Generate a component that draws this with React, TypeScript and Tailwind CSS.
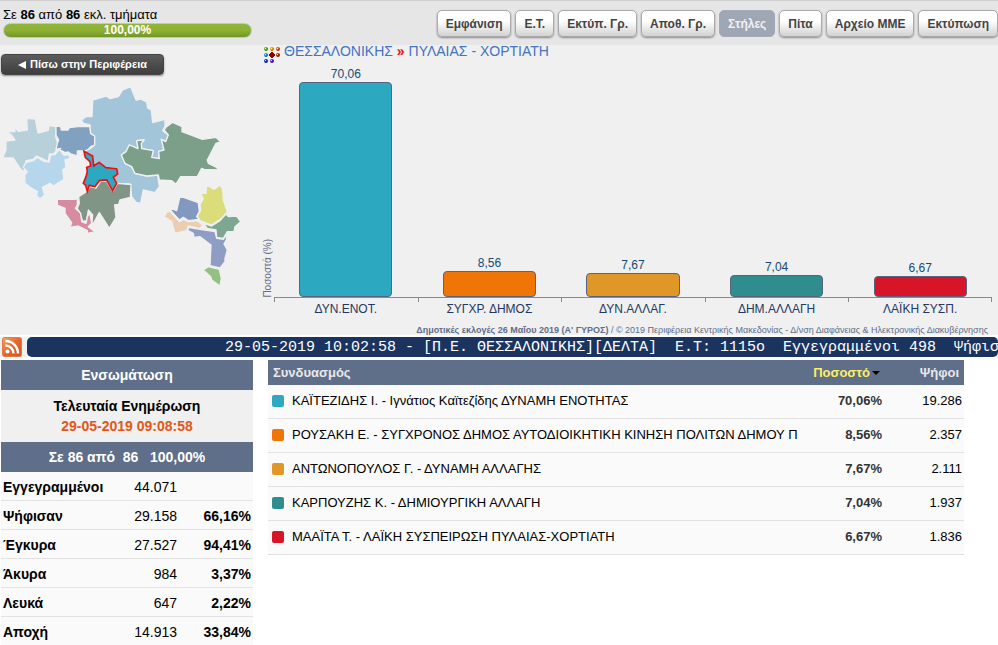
import React from 'react';
import clsx from 'clsx';

interface Party {
  short: string;
  name: string;
  percent: number;
  votes: string;
  color: string;
}

interface Region {
  id: string;
  fill: string;
  points: string;
}

const parties: Party[] = [
  {
    short: 'ΔΥΝ.ΕΝΟΤ.',
    name: 'ΚΑΪΤΕΖΙΔΗΣ Ι. - Ιγνάτιος Καϊτεζίδης ΔΥΝΑΜΗ ΕΝΟΤΗΤΑΣ',
    percent: 70.06,
    votes: '19.286',
    color: '#2ca9c1',
  },
  {
    short: 'ΣΥΓΧΡ. ΔΗΜΟΣ',
    name: 'ΡΟΥΣΑΚΗ Ε. - ΣΥΓΧΡΟΝΟΣ ΔΗΜΟΣ ΑΥΤΟΔΙΟΙΚΗΤΙΚΗ ΚΙΝΗΣΗ ΠΟΛΙΤΩΝ ΔΗΜΟΥ Π',
    percent: 8.56,
    votes: '2.357',
    color: '#f07507',
  },
  {
    short: 'ΔΥΝ.ΑΛΛΑΓ.',
    name: 'ΑΝΤΩΝΟΠΟΥΛΟΣ Γ. - ΔΥΝΑΜΗ ΑΛΛΑΓΗΣ',
    percent: 7.67,
    votes: '2.111',
    color: '#df9827',
  },
  {
    short: 'ΔΗΜ.ΑΛΛΑΓΗ',
    name: 'ΚΑΡΠΟΥΖΗΣ Κ. - ΔΗΜΙΟΥΡΓΙΚΗ ΑΛΛΑΓΗ',
    percent: 7.04,
    votes: '1.937',
    color: '#2f8d8e',
  },
  {
    short: 'ΛΑΪΚΗ ΣΥΣΠ.',
    name: 'ΜΑΑΪΤΑ Τ. - ΛΑΪΚΗ ΣΥΣΠΕΙΡΩΣΗ ΠΥΛΑΙΑΣ-ΧΟΡΤΙΑΤΗ',
    percent: 6.67,
    votes: '1.836',
    color: '#d81428',
  },
];

const turnout = [
  { label: 'Εγγεγραμμένοι', count: '44.071', percent: '' },
  { label: 'Ψήφισαν', count: '29.158', percent: '66,16%' },
  { label: 'Έγκυρα', count: '27.527', percent: '94,41%' },
  { label: 'Άκυρα', count: '984', percent: '3,37%' },
  { label: 'Λευκά', count: '647', percent: '2,22%' },
  { label: 'Αποχή', count: '14.913', percent: '33,84%' },
];

const toolbar = [
  'Εμφάνιση',
  'Ε.Τ.',
  'Εκτύπ. Γρ.',
  'Αποθ. Γρ.',
  'Στήλες',
  'Πίτα',
  'Αρχείο ΜΜΕ',
  'Εκτύπωση',
];

const regions: Region[] = [
  {
    id: 'west',
    fill: '#b7d0d9',
    points:
      '10,145 24,154 45,155 42,140 55,154 82,150 80,115 106,117 114,159 145,151 147,137 170,140 167,170 172,185 175,205 160,222 148,222 145,245 125,235 110,228 100,238 78,242 76,262 70,276 58,262 40,234 8,233 18,210 18,183 45,180 34,165',
  },
  {
    id: 'northwest',
    fill: '#80a1bf',
    points:
      '168,138 182,140 184,150 204,150 208,143 240,139 270,140 272,160 284,168 284,195 272,200 262,212 232,213 232,228 212,222 205,216 195,218 185,212 178,214 182,205 168,208 172,190 176,180 168,165',
  },
  {
    id: 'southwest',
    fill: '#b6d6ec',
    points:
      '78,247 100,242 112,232 130,243 147,246 152,225 165,224 178,208 192,226 208,224 210,235 195,240 198,262 188,270 192,298 160,318 150,310 127,322 134,345 120,357 110,347 112,335 90,322 75,310 74,285 82,275 70,262',
  },
  {
    id: 'north',
    fill: '#a2c5da',
    points:
      '245,120 258,110 276,110 278,60 318,48 330,56 355,50 368,30 392,20 408,60 422,57 440,66 443,84 454,90 458,128 495,118 495,140 488,152 505,165 497,185 484,178 492,210 476,214 478,236 455,232 460,212 425,206 424,190 432,180 410,182 414,206 388,195 378,215 364,225 375,250 395,260 405,280 440,288 473,285 478,320 465,338 430,330 422,370 408,367 395,350 390,312 352,310 340,295 350,265 318,262 295,246 282,258 278,228 252,214 272,205 284,195 284,168 272,160 270,135 250,130',
  },
  {
    id: 'east',
    fill: '#7b9f88',
    points:
      '492,150 498,142 518,127 546,140 546,155 607,178 648,172 662,186 648,190 622,240 625,250 650,262 655,270 612,268 605,265 592,290 542,290 528,312 515,302 478,300 475,285 440,288 405,280 395,260 375,250 364,225 378,215 388,195 414,206 410,182 432,180 424,190 425,206 460,212 455,232 478,236 476,214 492,210 484,178 497,185 505,165',
  },
  {
    id: 'south',
    fill: '#809585',
    points:
      '236,350 258,336 270,320 288,324 302,304 320,304 338,334 352,310 393,314 391,352 360,360 356,373 344,375 348,412 328,445 298,398 275,440 278,405 265,390 260,422 248,424 240,400 232,385 238,370',
  },
  {
    id: 'coast',
    fill: '#d78ba0',
    points:
      '172,357 225,358 232,355 232,375 226,385 242,400 245,425 258,430 262,410 270,400 275,430 265,440 285,455 262,460 262,452 235,438 210,442 215,428 195,400 195,385 172,375',
  },
  {
    id: 'lakes',
    fill: '#8299bf',
    points:
      '506,383 530,392 540,348 595,368 598,395 590,410 598,418 565,422 550,412 538,420 520,400',
  },
  {
    id: 'valley',
    fill: '#ebcdb1',
    points:
      '505,390 520,405 538,425 550,418 565,425 592,422 608,435 600,446 565,438 560,452 525,460 515,425 492,410',
  },
  {
    id: 'olive',
    fill: '#dadd79',
    points:
      '620,315 643,328 660,315 668,328 670,360 682,395 665,415 635,435 600,422 592,408 602,392 600,375 610,355 602,340 618,340',
  },
  {
    id: 'gulf',
    fill: '#7ea791',
    points:
      '610,430 635,438 660,422 678,402 685,410 710,408 722,425 705,440 702,455 682,455 670,475 650,472 648,450 622,445',
  },
  {
    id: 'peninsula',
    fill: '#8e9dc3',
    points:
      '565,442 600,448 645,455 650,475 670,478 678,465 680,478 672,492 682,510 675,535 675,545 660,564 630,557 633,495 600,470 582,472 580,460 564,452',
  },
  {
    id: 'cape',
    fill: '#92c181',
    points: '610,570 625,560 658,568 664,595 660,618 635,600 632,590',
  },
];

const selectedRegion =
  '252,214 278,228 281,258 297,247 318,263 350,266 353,282 340,292 350,310 338,332 320,300 298,302 285,320 268,316 262,334 257,316 250,310 258,290 262,275 260,262 272,258 270,245 256,232';

// px drawn for each percentage point
const BAR_SCALE = 3.075;

const formatPercent = (value: number) => value.toFixed(2).replace('.', ',');

const RegionMap = () => (
  <svg
    className="mt-[5px] block w-full"
    viewBox="0 0 762 630"
    role="img"
    aria-label="Χάρτης"
  >
    {regions.map((region) => (
      <polygon
        key={region.id}
        points={region.points}
        fill={region.fill}
        stroke="#f0f0f0"
        strokeWidth="4"
        strokeLinejoin="round"
      />
    ))}
    <polygon points={selectedRegion} fill="#2ca9c1" stroke="#f00d12" strokeWidth="5" />
  </svg>
);

const DotsIcon = () => {
  const dots = [
    [2, 2, '#5cb012'],
    [8, 2, '#f09a10'],
    [14, 2, '#d9541a'],
    [2, 8, '#1a8fe0'],
    [14, 8, '#b5290f'],
    [2, 14, '#1433c0'],
    [8, 14, '#5a1fc4'],
  ] as const;

  return (
    <svg className="mt-[2px] h-4 w-4 shrink-0" viewBox="0 0 16 16" aria-hidden="true">
      {dots.map(([x, y, color]) => (
        <g key={`${x}-${y}`}>
          <circle cx={x} cy={y} r="2" fill={color} />
          <path
            d={`M${x - 1} ${y + 1.5}A2 2 0 0 0 ${x + 1.5} ${y - 1}`}
            stroke="#111"
            strokeOpacity=".3"
            fill="none"
          />
          <circle cx={x - 0.5} cy={y - 0.5} r=".6" fill="#fff" />
        </g>
      ))}
      <path d="M7 5h2v1h1v1h1v2h-1v1h-1v1H7v-1H6V9H5V7h1V6h1z" fill="#8b0000" />
    </svg>
  );
};

const RssIcon = () => (
  <svg className="h-5 w-5" viewBox="0 0 20 20" aria-hidden="true">
    <defs>
      <linearGradient id="rss" x1="0" y1="0" x2="1" y2="1">
        <stop offset="0" stopColor="#f5a466" />
        <stop offset=".5" stopColor="#e8662c" />
        <stop offset="1" stopColor="#d8501c" />
      </linearGradient>
    </defs>
    <rect x=".5" y=".5" width="19" height="19" rx="2" fill="url(#rss)" stroke="#e07a48" />
    <circle cx="5.5" cy="14.5" r="2" fill="#fff" />
    <path
      d="M3.5 8.5a8 8 0 0 1 8 8M3.5 4a12.5 12.5 0 0 1 12.5 12.5"
      fill="none"
      stroke="#fff"
      strokeWidth="2.4"
    />
  </svg>
);

const Toolbar = () => (
  <div className="flex flex-1 items-start justify-end gap-1 pt-[9px]">
    {toolbar.map((label) => (
      <button
        key={label}
        type="button"
        className={clsx(
          'h-[27px] rounded-[5px] border px-2 text-[12px] font-bold whitespace-nowrap',
          label === 'Στήλες'
            ? 'border-[#a3abb9] bg-[#9fa7b5] text-[#f0f0f4]'
            : 'border-[#aaa] bg-linear-to-b from-white from-40% to-[#d2d2d2] text-[#444] shadow-[0_1px_2px_#888]'
        )}
      >
        {label}
      </button>
    ))}
  </div>
);

const BarChart = () => (
  <div className="flex pr-[6px]">
    <div className="flex w-[12px] items-end pb-[18px]">
      <span className="rotate-180 text-[10px] leading-[12px] text-[#5f6e89] [writing-mode:vertical-rl]">
        Ποσοστά (%)
      </span>
    </div>
    <div className="grid flex-1 grid-cols-5">
      {parties.map((party, i) => (
        <div key={party.short} className="flex flex-col items-center">
          <div className="flex h-[236px] w-full flex-col items-center justify-end">
            <span className="text-[12px] leading-[16px] text-[#154a75]">
              {formatPercent(party.percent)}
            </span>
            <div
              className="w-[65%] rounded-[4px] border border-[#566480]"
              style={{
                height: Math.round(party.percent * BAR_SCALE),
                backgroundColor: party.color,
              }}
            />
          </div>
          <div
            className={clsx(
              'h-[5px] w-full border-t border-l border-[#8a8a8a]',
              i === parties.length - 1 && 'border-r'
            )}
          />
          <span className="text-[12px] leading-[14px] text-[#1f3864]">{party.short}</span>
        </div>
      ))}
    </div>
  </div>
);

const Ticker = () => (
  <div className="mt-[2px] flex gap-[5px] bg-[#f0f0f0] pl-[2px]">
    <a href="#rss" aria-label="RSS">
      <RssIcon />
    </a>
    <div className="h-5 flex-1 overflow-hidden rounded-[5px] bg-[#1a345f] pl-[198px] font-['Liberation_Mono',monospace] text-[15px] leading-[22px] whitespace-pre text-white">
      {'29-05-2019 10:02:58 - [Π.Ε. ΘΕΣΣΑΛΟΝΙΚΗΣ][ΔΕΛΤΑ]  Ε.Τ: 1115ο  Εγγεγραμμένοι 498  Ψήφισ'}
    </div>
  </div>
);

const TurnoutPanel = () => (
  <section className="ml-px w-[252px] shrink-0 text-[14px]">
    <h2 className="bg-[#5f6e89] text-center leading-[30px] font-bold text-white">Ενσωμάτωση</h2>
    <div className="h-[52px] bg-[#f0f0f0] pt-[6px] text-center leading-[20px] font-bold">
      <div>Τελευταία Ενημέρωση</div>
      <div className="text-[#e2571a]">29-05-2019 09:08:58</div>
    </div>
    <div className="bg-[#5f6e89] text-center leading-[30px] font-bold whitespace-pre text-white">
      {'Σε 86 από  86   100,00%'}
    </div>
    <table className="w-full border-collapse bg-[#fafafa]">
      <tbody>
        {turnout.map((row) => (
          <tr key={row.label} className="border-b border-[#e2e2e2] leading-[26px] last:border-b-0">
            <th scope="row" className="p-0 pt-[2px] pl-[2px] text-left">
              {row.label}
            </th>
            <td className="w-[60px] p-0 pt-[2px] text-right">{row.count}</td>
            <td className="w-[76px] p-0 pt-[2px] pr-[2px] text-right font-bold">{row.percent}</td>
          </tr>
        ))}
      </tbody>
    </table>
  </section>
);

const ResultsTable = () => (
  <section className="min-w-0 flex-1">
    <table className="w-full table-fixed border-collapse bg-[#fafafa] text-[13px]">
      <thead>
        <tr className="bg-[#5f6e89] leading-[25px] text-[#e8e8e8]">
          <th className="p-0 pl-[5px] text-left">Συνδυασμός</th>
          <th className="w-[80px] p-0 pr-[2px] text-right text-[#ffee62]">
            <button type="button" className="inline-flex items-center gap-[2px] font-bold">
              Ποσοστό
              <svg className="h-1 w-2" viewBox="0 0 8 4" aria-hidden="true">
                <path d="M0 0h8L4 4z" fill="#000" />
              </svg>
            </button>
          </th>
          <th className="w-[82px] p-0 pr-[5px] text-right">Ψήφοι</th>
        </tr>
      </thead>
      <tbody>
        {parties.map((party) => (
          <tr key={party.short} className="border-b border-[#e2e2e2] leading-[31px]">
            <td className="p-0 pb-[2px] pl-1">
              <div className="flex items-center gap-2">
                <span
                  className="h-3 w-3 shrink-0 rounded-[2px]"
                  style={{ backgroundColor: party.color }}
                />
                <span className="overflow-hidden whitespace-nowrap">{party.name}</span>
              </div>
            </td>
            <td className="p-0 pb-[2px] text-right font-bold text-[#333]">
              {formatPercent(party.percent)}%
            </td>
            <td className="p-0 pr-[2px] pb-[2px] text-right">{party.votes}</td>
          </tr>
        ))}
      </tbody>
    </table>
  </section>
);

const App = () => {
  return (
    <div className="bg-white font-['Liberation_Sans',Arial,sans-serif] text-black">
      <div className="bg-[#f0f0f0]">
        <header className="flex h-[45px] border-t border-[#d0d0d0] bg-[#e6e6e6]">
          <div className="w-[254px] pt-[6px] pr-[2px] pl-[3px]">
            <div className="text-[13px] leading-[16px]">
              Σε <b>86</b> από <b>86</b> εκλ. τμήματα
            </div>
            <div className="rounded-full border border-[#b9c8d8] bg-linear-to-b from-[#8db53a] via-[#8fb030] to-[#6f962a] text-center text-[12px] leading-[13px] font-bold text-white">
              100,00%
            </div>
          </div>
          <Toolbar />
        </header>

        <div className="flex h-[290px]">
          <aside className="w-[254px] shrink-0 pt-[9px]">
            <button
              type="button"
              className="ml-px flex h-[21px] w-[163px] items-center justify-center gap-1 rounded-[4px] border border-[#444] bg-linear-to-b from-[#5c5c5c] to-[#3e3e3e] text-[11px] font-bold text-white shadow-[0_1px_2px_#888]"
            >
              <svg className="h-2 w-2" viewBox="0 0 8 8" aria-hidden="true">
                <path d="M8 0v8L0 4z" fill="#fff" />
              </svg>
              Πίσω στην Περιφέρεια
            </button>
            <RegionMap />
          </aside>
          <main className="min-w-0 flex-1 pl-2">
            <h1 className="flex h-4 gap-1 pl-[2px] text-[14px] leading-[12px] text-[#4472c4]">
              <DotsIcon />
              <span>
                <a href="#thessaloniki">ΘΕΣΣΑΛΟΝΙΚΗΣ</a>{' '}
                <b className="text-[#f00d12]">»</b> <a href="#pylaia">ΠΥΛΑΙΑΣ - ΧΟΡΤΙΑΤΗ</a>
              </span>
            </h1>
            <BarChart />
            <p className="mt-[7px] pr-[10px] text-right text-[9px] leading-[14px] whitespace-nowrap text-[#5f6e89]">
              <b>Δημοτικές εκλογές 26 Μαΐου 2019 (Α' ΓΥΡΟΣ)</b> / © 2019 Περιφέρεια Κεντρικής
              Μακεδονίας - Δ/νση Διαφάνειας &amp; Ηλεκτρονικής Διακυβέρνησης
            </p>
          </main>
        </div>
      </div>

      <Ticker />

      <div className="mt-[3px] flex gap-[15px] pr-[34px]">
        <TurnoutPanel />
        <ResultsTable />
      </div>
    </div>
  );
};

export default App;
